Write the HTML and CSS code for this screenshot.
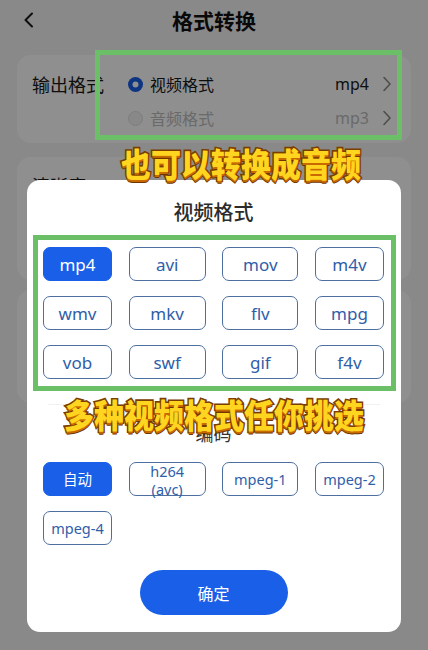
FILE: index.html
```html
<!DOCTYPE html>
<html lang="zh-CN">
<head>
<meta charset="utf-8">
<title>格式转换</title>
<link rel="stylesheet" href="styles.css">
</head>
<body>
<div class="screen">
  <header class="topbar">
    <svg class="back" width="12" height="16" viewBox="0 0 12 16"><path d="M9 1.5 L2.5 8 L9 14.5" fill="none" stroke="#1a1a1a" stroke-width="2" stroke-linecap="round" stroke-linejoin="round"/></svg>
    <h1 class="title">格式转换</h1>
  </header>

  <section class="card card-format">
    <div class="label">输出格式</div>
    <div class="options">
      <div class="opt on">
        <span class="radio"></span>
        <span class="name">视频格式</span>
        <span class="val">mp4</span>
        <svg class="chev" width="10" height="16" viewBox="0 0 10 16"><path d="M2 1.5 L8 8 L2 14.5" fill="none" stroke="#8a8a8a" stroke-width="1.6" stroke-linecap="round" stroke-linejoin="round"/></svg>
      </div>
      <div class="opt off">
        <span class="radio"></span>
        <span class="name">音频格式</span>
        <span class="val">mp3</span>
        <svg class="chev" width="10" height="16" viewBox="0 0 10 16"><path d="M2 1.5 L8 8 L2 14.5" fill="none" stroke="#8a8a8a" stroke-width="1.6" stroke-linecap="round" stroke-linejoin="round"/></svg>
      </div>
    </div>
  </section>

  <section class="card card-quality">
    <div class="label">清晰度</div>
  </section>

  <section class="card card-third"></section>
</div>

<div class="mask">
  <div class="modal">
    <h2 class="modal-title">视频格式</h2>
    <div class="chips">
      <div class="chip sel">mp4</div>
      <div class="chip">avi</div>
      <div class="chip">mov</div>
      <div class="chip">m4v</div>
      <div class="chip">wmv</div>
      <div class="chip">mkv</div>
      <div class="chip">flv</div>
      <div class="chip">mpg</div>
      <div class="chip">vob</div>
      <div class="chip">swf</div>
      <div class="chip">gif</div>
      <div class="chip">f4v</div>
    </div>
    <div class="divider"></div>
    <h3 class="sub-title">编码</h3>
    <div class="chips codecs">
      <div class="chip sel">自动</div>
      <div class="chip two">h264<br>(avc)</div>
      <div class="chip">mpeg-1</div>
      <div class="chip">mpeg-2</div>
      <div class="chip">mpeg-4</div>
    </div>
    <button class="ok">确定</button>
  </div>
</div>

<div class="mark mark-top"></div>
<div class="mark mark-grid"></div>
<div class="caption cap-top">也可以转换成音频</div>
<div class="caption cap-mid">多种视频格式任你挑选</div>
</body>
</html>
```

FILE: styles.css
```css
* { box-sizing: border-box; }

html, body {
  margin: 0;
  padding: 0;
}

body {
  width: 428px;
  height: 650px;
  overflow: hidden;
  position: relative;
  background: #f4f4f4;
  font-family: "Noto Sans", "Noto Sans CJK SC", sans-serif;
  color: #111;
}

.screen {
  display: flex;
  flex-direction: column;
  padding: 0 17px;
}

.topbar {
  height: 40px;
  position: relative;
  display: flex;
  align-items: center;
  justify-content: center;
}

.back {
  position: absolute;
  left: 6px;
  top: 12px;
}

.title {
  margin: 0;
  font-family: "Noto Sans CJK SC", sans-serif;
  font-size: 21px;
  font-weight: 700;
  line-height: 40px;
  color: #111;
}

.card {
  background: #fff;
  border-radius: 14px;
}

.card-format {
  margin-top: 15px;
  height: 88px;
  padding: 12px 19px 0 15px;
  display: flex;
  align-items: flex-start;
}

.label {
  width: 96px;
  flex: none;
  font-family: "Noto Sans CJK SC", sans-serif;
  font-size: 18px;
  line-height: 34px;
  color: #1a1a1a;
}

.options {
  flex: 1;
  display: flex;
  flex-direction: column;
}

.opt {
  height: 34px;
  display: flex;
  align-items: center;
}

.radio {
  width: 15px;
  height: 15px;
  border-radius: 50%;
  flex: none;
  margin-right: 7px;
}

.opt.on .radio {
  background: #1a5fe8;
  box-shadow: inset 0 0 0 4.5px #1a5fe8, inset 0 0 0 8px #fff;
  background: #fff;
}

.opt.off .radio {
  background: #f2f2f2;
  border: 1px solid #e0e0e0;
}

.name {
  font-family: "Noto Sans CJK SC", sans-serif;
  font-size: 16px;
  color: #1a1a1a;
}

.val {
  margin-left: auto;
  font-size: 16px;
  color: #1a1a1a;
}

.chev {
  margin-left: 13px;
}

.opt.off .name,
.opt.off .val {
  color: #bdbdbd;
}

.card-quality {
  margin-top: 14px;
  height: 123px;
  padding: 16px 0 0 15px;
}

.card-quality .label {
  line-height: 24px;
}

.card-third {
  margin-top: 10px;
  height: 113px;
}

.mask {
  position: absolute;
  inset: 0;
  background: rgba(0, 0, 0, 0.44);
  display: flex;
  justify-content: center;
  align-items: flex-end;
  padding-bottom: 18px;
}

.modal {
  width: 374px;
  background: #fff;
  border-radius: 13px;
  padding: 20px 17px 17px 16px;
  display: flex;
  flex-direction: column;
}

.modal-title {
  margin: 0;
  text-align: center;
  font-family: "Noto Sans CJK SC", sans-serif;
  font-size: 20px;
  font-weight: 500;
  line-height: 24px;
  color: #2b2b2b;
}

.chips {
  margin-top: 23px;
  display: grid;
  grid-template-columns: 69px 77px 76px 69px;
  justify-content: space-between;
  grid-auto-rows: 34px;
  row-gap: 15px;
}

.chip {
  border: 1.5px solid #4d6f9f;
  border-radius: 7px;
  display: flex;
  align-items: center;
  justify-content: center;
  text-align: center;
  font-size: 17px;
  color: #2f5ea9;
  line-height: 1;
}

.chip.sel {
  background: #1a5fe8;
  border-color: #1a5fe8;
  color: #fff;
}

.divider {
  margin: 25px 4px 0 5px;
  height: 1px;
  background: #f1f1f1;
}

.sub-title {
  margin: 16px 0 0;
  text-align: center;
  font-family: "Noto Sans CJK SC", sans-serif;
  font-size: 18px;
  font-weight: 400;
  line-height: 24px;
  color: #333;
}

.codecs {
  margin-top: 17px;
}

.codecs .chip {
  font-size: 14.5px;
  font-family: "Noto Sans", "Noto Sans CJK SC", sans-serif;
}

.codecs .chip.two {
  line-height: 18px;
  padding-top: 1px;
  font-size: 14.5px;
}

.ok {
  margin: 25px auto 0;
  width: 148px;
  height: 45px;
  border: none;
  border-radius: 23px;
  background: #1a5fe8;
  color: #fff;
  font-family: "Noto Sans CJK SC", sans-serif;
  font-size: 16px;
}

.mark {
  position: absolute;
  border: 5px solid #6abf67;
}

.mark-top {
  left: 95px;
  top: 50px;
  width: 307px;
  height: 90px;
}

.mark-grid {
  left: 33px;
  top: 235px;
  width: 363px;
  height: 156px;
  border-width: 5.5px;
}

.caption {
  position: absolute;
  font-family: "Noto Sans CJK SC", sans-serif;
  font-weight: 900;
  font-size: 30px;
  line-height: 32px;
  color: #ffd51f;
  -webkit-text-stroke: 3px #7a3e00;
  paint-order: stroke fill;
  text-shadow: 0 2px 0 #c86a00, 0 3px 0 #6e3500;
  white-space: nowrap;
  transform: scaleY(1.08);
}

.cap-top {
  left: 121px;
  top: 147px;
}

.cap-mid {
  left: 0;
  right: 0;
  text-align: center;
  top: 398px;
}
```
